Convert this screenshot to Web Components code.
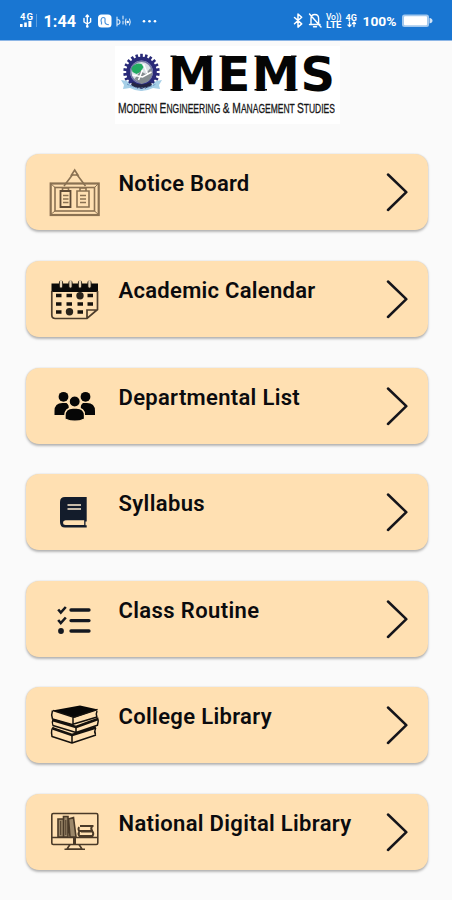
<!DOCTYPE html>
<html lang="en">
<head>
<meta charset="utf-8">
<title>MEMS</title>
<style>
html,body{margin:0;padding:0;background:#fafafa;overflow:hidden;height:900px}
body{font-family:Roboto,"Liberation Sans",sans-serif;color:#0b0b0e}
</style>
</head>
<body>
<mems-app></mems-app>
<script>
const define = (name, html) => customElements.define(name, class extends HTMLElement {
  constructor() {
    super();
    this.attachShadow({ mode: 'open' }).innerHTML = html;
  }
});

define('status-bar', `
<style>
:host{display:flex;justify-content:space-between;height:40px;background:#1976d2;border-bottom:1px solid #8db6e6;box-sizing:content-box}
svg{display:block;font-family:Roboto,"Liberation Sans",sans-serif;font-weight:700;fill:#fff}
.l{fill:none;stroke:#fff;stroke-linecap:round;stroke-linejoin:round}
</style>
<svg width="170" height="40" viewBox="0 0 170 40">
  <text x="20" y="19.5" font-size="9.5" textLength="13">4G</text>
  <path d="M20 24h2.6v3H20zM24.2 22.5h2.6V27h-2.6zM28.4 21h3v6h-3z"/>
  <path d="M36 14h1v13h-1z" opacity=".3"/>
  <text x="43.5" y="26.7" font-size="16" textLength="32.5" lengthAdjust="spacingAndGlyphs">1:44</text>
  <path class="l" stroke-width="1.4" d="M87.3 15.5v11M84 18.5v3.5l3.3 2 3.3-2v-3.5M86 16.5l1.3-1.5 1.3 1.5"/>
  <circle cx="87.3" cy="26.4" r="1.3"/>
  <rect x="98" y="14.5" width="13.5" height="13" rx="3.5"/>
  <path d="M101 21.500q0-4 2.300-4t1.700 3v1.500q0 2.500 3.800 2.700M101.500 24.500v-3" fill="none" stroke="#4b93dd" stroke-width="1.200"/>
  <path class="l" stroke-width="1.100" opacity=".85" d="M117 17v9M117 19.500q3 0 3 2.500t-3 2.500M123 16v3M123 21v3M126 19q-1.500 3 0 6M129.500 19q1.500 3 0 6"/>
  <circle cx="127.700" cy="22" r="1.300"/>
  <circle cx="144" cy="21.200" r="1.300"/><circle cx="149.500" cy="21.200" r="1.300"/><circle cx="155" cy="21.200" r="1.300"/>
</svg>
<svg width="162" height="40" viewBox="290 0 162 40">
  <path class="l" stroke-width="1.500" d="M294.500 17.500l7.200 6.400-3.700 3.200V14l3.700 3.200-7.200 6.600"/>
  <path class="l" stroke-width="1.400" d="M309.500 24.500h10.500M311 24v-5.500q0-4 3.800-4t3.800 4V24M313.500 26.800h3M309.500 14l11.500 13"/>
  <text x="326" y="19.700" font-size="8.500" font-weight="500" textLength="15.500">Vo))</text>
  <text x="326" y="27.700" font-size="8.500" textLength="15.500" lengthAdjust="spacingAndGlyphs">LTE</text>
  <text x="345.500" y="20.700" font-size="9" textLength="11.500">4G</text>
  <path class="l" stroke-width="1.300" d="M349.500 22v4.500M348 25l1.500 1.500 1.500-1.500M354 26.500V22M352.500 23.500L354 22l1.500 1.500"/>
  <text x="362.500" y="26.400" font-size="13.500" textLength="34" lengthAdjust="spacingAndGlyphs">100%</text>
  <rect x="402" y="14.500" width="27" height="12.500" rx="2.500" opacity=".6"/>
  <rect x="404" y="16.300" width="23" height="9" rx="1"/>
  <path d="M429.500 18q3 .5 3 2.700t-3 2.700z" opacity=".8"/>
</svg>`);

const teeth = Array.from({ length: 22 }, (_, i) =>
  `<rect x="-1.3" y="-18.200" width="2.600" height="4" transform="rotate(${i * 360 / 22})"/>`).join('');

define('college-logo', `
<style>
:host{display:block;width:225px;height:78px;background:#fff}
svg{display:block}
.name{margin:0 0 0 3px;width:max-content;font:15px/18px "Liberation Sans",sans-serif;color:#161616;-webkit-text-stroke:.3px #161616;transform-origin:0 0;white-space:nowrap;font-size:12.800px}
.name b{font-weight:400;font-size:15.500px}
</style>
<svg width="225" height="53" viewBox="115 46 225 53">
  <g transform="translate(141.500 72)" fill="#292a78">
    ${teeth}
    <circle r="13.300" fill="#dce2e7" stroke="#292a78" stroke-width="4"/>
    <circle r="10.800" fill="none" stroke="#7479a6" stroke-width="1.500"/>
    <path d="M-10-4q4-6 10-4l2 3-3 5-4 2-4-2z" fill="#22aa61"/>
    <path d="M-7 7L-1-1l5 3 5-6 2 6-4 7-7 3z" fill="#858d91"/>
    <path d="M-3 8l4-10M2-8l4 10M-9 3l10 2 9-5" stroke="#fff" stroke-width="1.500" fill="none"/>
    <path d="M-9 10q9 5 18 0l2 4q-11 5-22 0z" fill="#242644"/>
  </g>
  <path d="M121 80l6 1q7 8 14.500 8t14.500-8l6-1-3 5 1 4-7-1q-12 6-23 0l-7 1 1-4z" fill="#a6cfe7"/>
  <path d="M127 84q14 8 29 0" stroke="#6590bd" stroke-dasharray="2 1" fill="none"/>
  <text x="168 217.500 252 300.500" y="90.500" font-family="DejaVu Sans,sans-serif" font-weight="700" font-size="48" fill="#050505">MEMS</text>
  <path d="M170.500 56.200h6M207 56.200h5.500M170.500 89.800h12.500M200.500 89.800h13M219.500 56.200h6M219.500 89.800h6M254.500 56.200h6M291 56.200h5.500M254.500 89.800h12.500M284.500 89.800h13" stroke="#050505" stroke-width="1.500" fill="none"/>
</svg>
<p class="name"><b>M</b>ODERN <b>E</b>NGINEERING <b>&amp; M</b>ANAGEMENT <b>S</b>TUDIES</p>`);

/* Icon drawings share a 60x76 box, the full height of a card. */
const icons = {
  notice: `<g fill="none" stroke="#8a7152" stroke-width="1.600">
    <rect x="5.700" y="29.500" width="48" height="31.500" stroke-width="2.200"/><rect x="10" y="33.500" width="39.500" height="23.500"/>
    <path d="M5 29l5 4.500M54 29l-4.500 4.500M5 61l5-4M54 61l-4.500-4" stroke-width="1"/>
    <path d="M19 32L28 20M40.500 32L31.500 20"/><path d="M26.500 21l3.200-5 3.200 5z"/>
    <path d="M17.500 37v-3h6v3M35 37v-3h6v3M32 37h12v16H32z"/><path d="M15.500 37h10v16h-10z" stroke="#5f4b36" stroke-width="1.800"/>
    <path d="M18 41.500h5.500M18 45h5.500M18 48.500h5.500M35 41.500h6M35 45h6M35 48.500h6"/></g>`,
  calendar: `<path d="M6.500 22.500h46.500V31H6.500z" fill="#0b0a09"/>
    <path d="M6.800 30v24q0 3.500 3.500 3.500H42l10.500-9V30M42 57.500v-8.500h10.500" fill="none" stroke="#4d3d2c" stroke-width="1.700"/>
    <g stroke="#211a12" stroke-width="4.200" stroke-linecap="round"><path d="M16 21.500v4M25.500 21.500v4M35 21.500v4M44.500 21.500v4"/></g>
    <g stroke="#e7d5b9" stroke-width="2.300" stroke-linecap="round"><path d="M16 20.500v5M25.500 20.500v5M35 20.500v5M44.500 20.500v5"/></g>
    <path d="M11 34.500h5.500M21.500 34.500H27M42.500 34.500H48M11 43h5.500M21.500 43H27M32.500 43H38M42.500 43H48M11 51h5.500M32.500 51H38" stroke="#17120d" stroke-width="3.300"/>
    <circle cx="35" cy="34.800" r="3.700" fill="#29231b"/><circle cx="24.500" cy="50.800" r="3.700" fill="#29231b"/>`,
  people: `<g fill="#060606"><circle cx="18.500" cy="28.800" r="4.900"/><circle cx="40.500" cy="28.800" r="4.900"/>
    <path d="M9.500 47v-4q0-8 8-8h4q3 2 2 6-4 1-4 6zM50 47v-4q0-8-8-8h-4q-3 2-2 6 4 1 4 6z"/>
    <circle cx="29.700" cy="33.500" r="5.600" stroke="#ffe0b2" stroke-width="1.300"/>
    <path d="M20 51v-3.500q0-7.500 8-7.500h3.500q8 0 8 7.500V51q-9.500 4.500-19.500 0z" stroke="#ffe0b2" stroke-width="1.300"/></g>`,
  book: `<path d="M20 23h21.700v24.500h-1.200v3.700h1.200v2.300H20q-5 0-5-5.500V28q0-5 5-5z" fill="#131c2b"/>
    <path d="M20.500 46.300h18.700v4.700H20.500q-2.500 0-2.500-2.300t2.500-2.400z" fill="#ffe0b2"/>
    <path d="M22.500 31h13.500M22.500 35h13.500" stroke="#c7bba8" stroke-width="1.900"/>`,
  checklist: `<path d="M26 29h18M26 39.600h18M26 50h18" stroke="#141820" stroke-width="3.300" stroke-linecap="round"/>
    <path d="M13.200 28.500l2.600 3 5-5.500M13.200 39l2.600 3 5-5.500" fill="none" stroke="#141820" stroke-width="2.600"/><circle cx="16" cy="50" r="2.900" fill="#141820"/>`,
  books: `<path d="M7.500 23.500L35 18.500l18 4-23 8z" fill="#080706"/>
    <g fill="none" stroke="#15110d" stroke-width="1.500" stroke-linejoin="round">
    <path d="M7.500 23.500q-1.500 4 0 8.500L27 37.500 52 30M8 23.500L28 30v7.500M28 30.500l24.500-8M52 24q-1.500 3 0 6.500"/>
    <path d="M8 33q-1.500 2.500 0 5.500L31 45.500 53 38M31 39.500v6M52.500 30.500q1.500 3.500 0 7.500"/><path d="M7.500 33L31 40l22-8" stroke-width="2.800"/>
    <path d="M8.500 40q-3 2.500-1.500 9.500L27 56l24-8M27 48.500V56M50.500 41.500q-1.500 3 0 6"/><path d="M8 41.500L27 48l24-7.500" stroke-width="2.800"/></g>`,
  digital: `<g fill="none" stroke="#4a3a28" stroke-width="1.600">
    <rect x="6.800" y="19.500" width="46" height="31" rx="1.500"/><path d="M7 43.500h45.500M25 50.500l-3 4.500h15l-3-4.500M19.500 55.300H40" />
    <path d="M29.500 44v7" stroke-width="3"/>
    <path d="M13 25h5.500v18H13zM18.500 22.500H23V43h-4.500zM23.500 25l5-1.500L31 43h-6z" fill="#9b8769"/>
    <path d="M15.700 27v14M20.800 26v15" stroke-width="1"/>
    <path d="M35 32h13.500M34 33q-1 2 0 4h14M36 37.500h11.500q1.500 2 0 4.500H34.500q-2-2 0-4M47 32.500q-1.500 2 0 4" stroke-width="2"/></g>`
};

customElements.define('menu-icon', class extends HTMLElement {
  connectedCallback() {
    this.attachShadow({ mode: 'open' }).innerHTML = `
<style>:host{display:block;width:60px;height:76px}svg{display:block}</style>
<svg width="60" height="76" viewBox="0 0 60 76">${icons[this.getAttribute('name')]}</svg>`;
  }
});

define('menu-card', `
<style>
:host{display:grid;grid-template-columns:60px 1fr 22px;column-gap:13.500px;box-sizing:border-box;height:76px;padding:0 20px 0 19.500px;border-radius:13px;background:#ffe0b2;box-shadow:0 1.500px 2.500px rgba(0,0,0,.27),0 0 1.500px rgba(0,0,0,.1)}
.title{padding-top:17px;font-size:22px;line-height:26px;font-weight:600;white-space:nowrap}
svg{display:block}
</style>
<slot name="icon"></slot>
<div class="title"><slot></slot></div>
<svg width="22" height="76" viewBox="0 0 22 76"><path d="M2 20.500L20.300 38.200 2 56" fill="none" stroke="#15151b" stroke-width="2.500" stroke-linecap="round" stroke-linejoin="round"/></svg>`);

const items = [
  ['notice', 'Notice Board', 130.5], ['calendar', 'Academic Calendar', 196.5], ['people', 'Departmental List', 181],
  ['book', 'Syllabus', 86], ['checklist', 'Class Routine', 140.5], ['books', 'College Library', 153], ['digital', 'National Digital Library', 232.5]
];

define('mems-app', `
<style>
:host{display:flex;flex-direction:column;width:452px;height:900px;background:#fafafa;overflow:hidden}
college-logo{margin:5px 0 0 115px}
main{display:flex;flex-direction:column;gap:30.620px;padding:30.450px 24.500px 0 25.500px}
menu-card{flex:none}
</style>
<status-bar></status-bar>
<college-logo></college-logo>
<main>${items.map(([icon, title]) => `<menu-card><menu-icon slot="icon" name="${icon}"></menu-icon><span>${title}</span></menu-card>`).join('')}</main>`);

const app = document.querySelector('mems-app').shadowRoot;

/* Letter spacing brings every title to its set width. */
app.querySelectorAll('menu-card > span').forEach((span, i) => {
  const gap = (items[i][2] + .5 - span.getBoundingClientRect().width) / items[i][1].length;
  span.style.letterSpacing = gap.toFixed(3) + 'px';
});

/* The college name is condensed to the width of the logo. */
const line = app.querySelector('college-logo').shadowRoot.querySelector('.name');
line.style.transform = `scaleX(${217 / line.offsetWidth})`;
</script>
</body>
</html>
